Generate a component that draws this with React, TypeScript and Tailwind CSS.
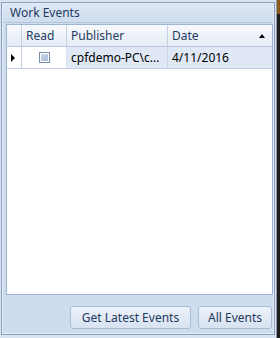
export default function App() {
  const font = { fontFamily: '"Noto Sans", "Open Sans", sans-serif' };
  return (
    <div className="w-[280px] h-[338px] flex bg-[#d9e4f2] text-[12px]" style={font}>
      <div className="flex-1 flex flex-col pl-px pt-[2px] pb-[3px]">
        <div className="flex-1 flex flex-col border border-[#8a9fbf] bg-[#cfdcee]">
          <div className="flex-1 flex flex-col border border-[#e4ecf7]">
            {/* title */}
            <div className="h-[19px] flex items-center pl-[7px] text-[#1e3a5f] bg-gradient-to-b from-[#dde7f4] to-[#cfdcee] border-b border-[#b4c5dd]">
              Work Events
            </div>
            {/* grid */}
            <div className="ml-[3px] mr-0 mt-px h-[271px] border border-[#9fb4d3] bg-white flex flex-col">
              <div className="h-[22px] flex bg-gradient-to-b from-[#f7f9fc] to-[#e5ecf6] border-b border-[#b7c7de] text-[#1e3a5f]">
                <div className="w-[15px] border-r border-[#c3d0e3]" />
                <div className="w-[45px] border-r border-[#c3d0e3] flex items-center pl-[4px]">Read</div>
                <div className="w-[101px] border-r border-[#c3d0e3] flex items-center pl-[4px]">Publisher</div>
                <div className="flex-1 flex items-center justify-between pl-[4px] pr-[7px]">
                  <span>Date</span>
                  <span className="w-0 h-0 border-l-[3.5px] border-r-[3.5px] border-b-[4px] border-l-transparent border-r-transparent border-b-black" />
                </div>
              </div>
              <div className="h-[22px] flex border-b border-[#c3d0e3] text-black">
                <div className="w-[15px] border-r border-[#c3d0e3] flex items-center pl-[4px]">
                  <span className="w-0 h-0 border-t-[4px] border-b-[4px] border-l-[4px] border-t-transparent border-b-transparent border-l-black" />
                </div>
                <div className="w-[45px] border-r border-[#dbe4f0] flex items-center justify-center">
                  <span className="w-[11px] h-[11px] border border-[#7a8ba5] bg-white p-px flex">
                    <span className="flex-1 bg-gradient-to-br from-[#c7d6ea] to-[#a9bedb]" />
                  </span>
                </div>
                <div className="w-[101px] border-r border-[#c9d6e8] bg-[#dfe8f4] flex items-center pl-[4px] whitespace-nowrap overflow-hidden">
                  cpfdemo-PC\c...
                </div>
                <div className="flex-1 bg-[#dfe8f4] flex items-center pl-[4px]">4/11/2016</div>
              </div>
            </div>
            {/* buttons */}
            <div className="flex-1 flex items-end justify-end gap-[7px] pr-px pb-[4px]">
              <button className="w-[121px] h-[23px] rounded-[3px] border border-[#a8bbd5] bg-gradient-to-b from-[#edf2f9] to-[#d7e2f1] text-[#1e3a5f] text-[12px]" style={font}>
                Get Latest Events
              </button>
              <button className="w-[74px] h-[23px] rounded-[3px] border border-[#a8bbd5] bg-gradient-to-b from-[#edf2f9] to-[#d7e2f1] text-[#1e3a5f] text-[12px]" style={font}>
                All Events
              </button>
            </div>
          </div>
        </div>
      </div>
      <div className="w-px bg-[#d9e4f2]" />
      <div className="w-px bg-[#8f98a6]" />
      <div className="w-[3px] flex flex-col bg-[#1d1d1d]">
        <div className="h-[14px] bg-[#8a5a1a]" />
      </div>
    </div>
  );
}
